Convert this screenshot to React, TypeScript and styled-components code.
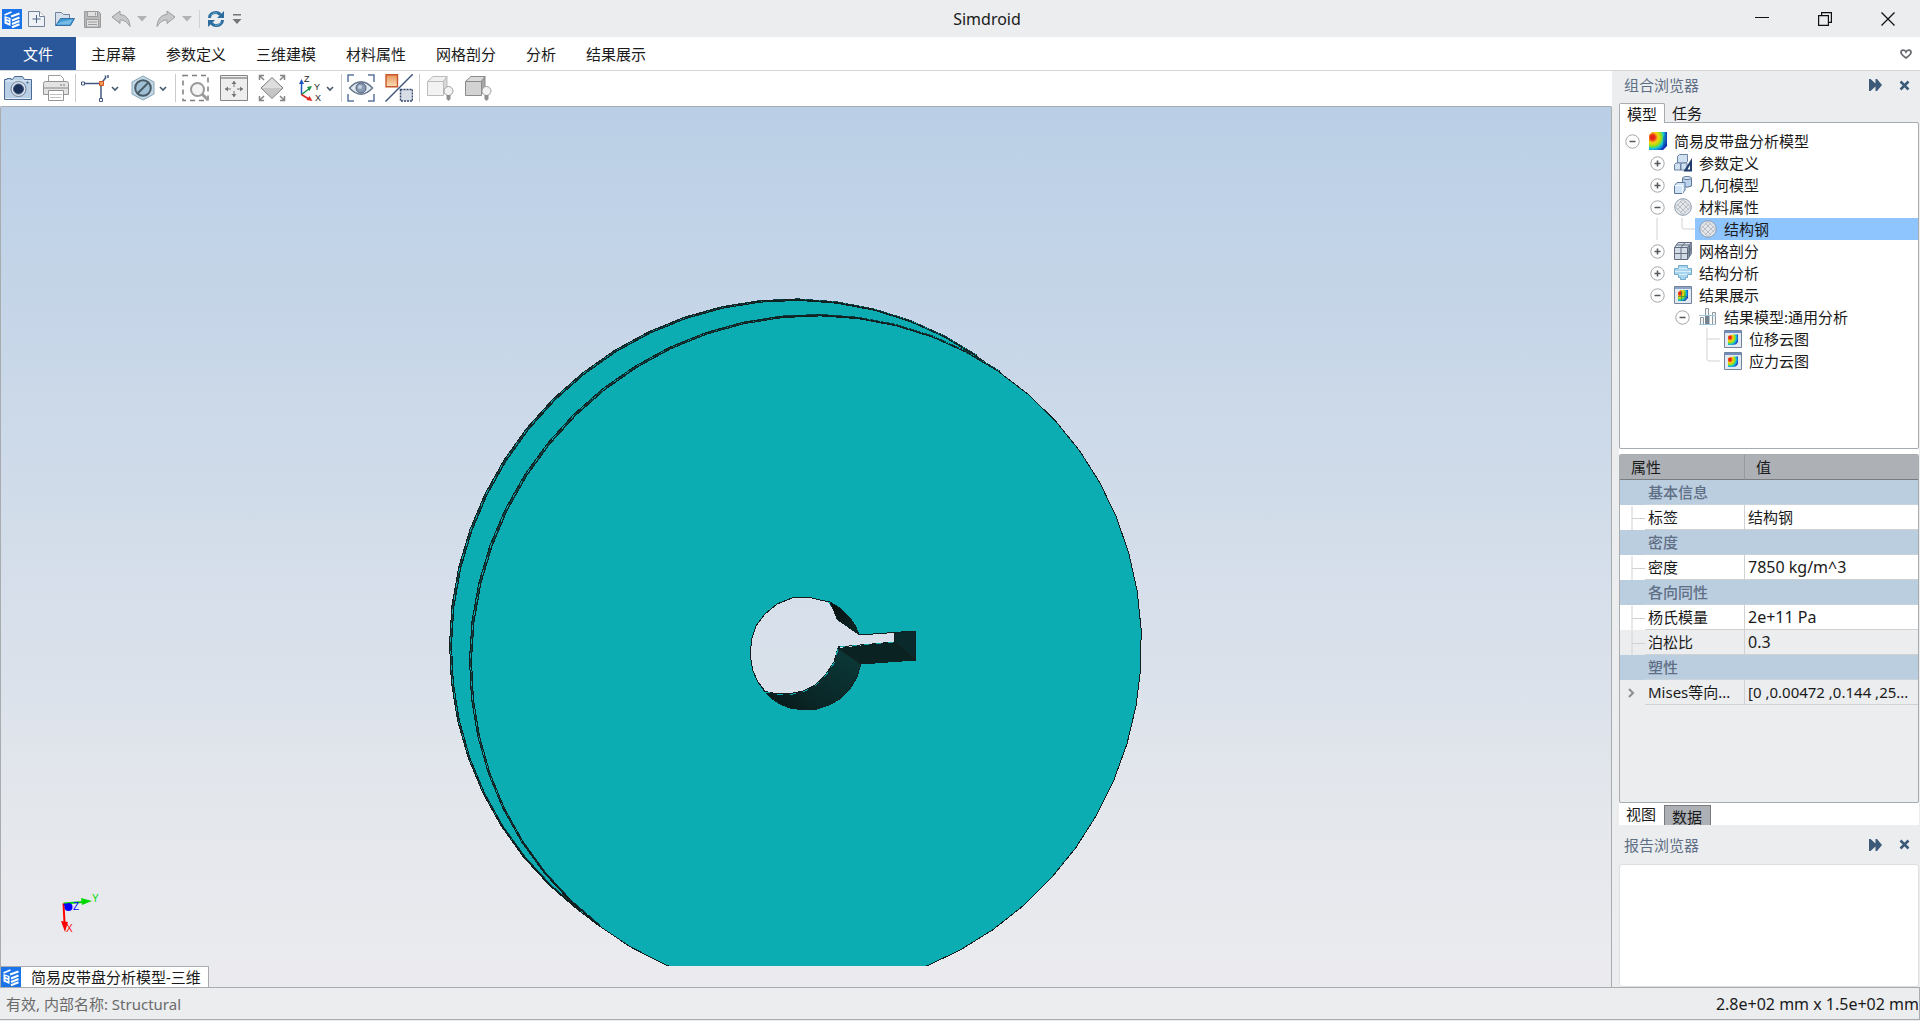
import React from "react";
import styled, { createGlobalStyle } from "styled-components";

const c = {
  chrome: "#ebedef",
  line: "#a9acaf",
  softLine: "#d4d6d9",
  accent: "#2a579a",
  slate: "#5f6f86",
  ink: "#1a1a1a",
  steel: "#3c5a78",
  section: "#bbcee0",
  header: "#adb1b6",
  selected: "#8ec5ff",
  teal: "#0bacb2",
  edge: "#141f20",
  shadow: "#0c3f42",
};

const GlobalStyle = createGlobalStyle`
  *, *::before, *::after { box-sizing: border-box; }
  body {
    margin: 0;
    background: ${c.chrome};
    color: ${c.ink};
    font-family: "Noto Sans", "Noto Sans CJK SC", sans-serif;
    font-size: 15px;
    line-height: 20px;
  }
  button { font: inherit; color: inherit; background: none; border: 0; padding: 0; margin: 0; }
  svg { display: block; }
`;

const Window = styled.div`
  display: flex;
  flex-direction: column;
  height: 100vh;
  min-height: 700px;
  overflow: hidden;
`;

/* ---------- title bar ---------- */

const TitleBar = styled.header`
  display: flex;
  align-items: center;
  flex: none;
  height: 37px;
  padding: 0 1px 0 2px;
`;

const QuickAccess = styled.div`
  display: flex;
  align-items: center;
`;

const QuickButton = styled.button`
  display: grid;
  place-items: center;
  width: 28px;
  height: 28px;
`;

const QuickArrow = styled.button`
  display: grid;
  place-items: center;
  width: 14px;
  height: 28px;
`;

const QuickDivider = styled.span`
  width: 1px;
  height: 18px;
  margin: 0 2px 0 5px;
  background: #d0d3d6;
`;

const QuickGap = styled.span`
  width: 3px;
`;

const LogoSlot = styled.span`
  margin-right: 1px;
`;

const WindowTitle = styled.h1`
  flex: 1;
  margin: 0;
  font-size: 16px;
  font-weight: 400;
  text-align: center;
`;

const WindowButton = styled.button`
  display: grid;
  place-items: center;
  width: 63px;
  height: 36px;
`;

/* ---------- ribbon tabs ---------- */

const MenuBar = styled.nav`
  display: flex;
  align-items: stretch;
  flex: none;
  height: 34px;
  background: #fff;
  border-bottom: 1px solid ${c.softLine};
`;

const FileButton = styled.button`
  width: 76px;
  background: ${c.accent};
  color: #fff;
`;

const MenuButton = styled.button`
  padding: 0 15px;
`;

const MenuSpacer = styled.span`
  flex: 1;
`;

const CollapseButton = styled.button`
  display: grid;
  place-items: center;
  width: 28px;
`;

/* ---------- work area ---------- */

const Work = styled.div`
  display: flex;
  flex: 1;
  min-height: 0;
`;

const Main = styled.main`
  display: flex;
  flex-direction: column;
  flex: 1;
  min-width: 0;
`;

const Toolbar = styled.div`
  display: flex;
  align-items: center;
  flex: none;
  height: 35px;
  padding: 0 0 2px 4px;
  background: #fff;
`;

const ToolGroup = styled.div<{ $gap?: number }>`
  display: flex;
  gap: ${(p) => p.$gap ?? 10}px;
`;

const ToolDivider = styled.span<{ $wide?: boolean }>`
  width: 1px;
  height: 28px;
  margin: 0 ${(p) => (p.$wide ? 6 : 5)}px;
  background: #c9cccf;
`;

const ToolButton = styled.button`
  display: flex;
  align-items: center;
  height: 30px;
`;

const Viewport = styled.section`
  display: flex;
  flex-direction: column;
  flex: 1;
  min-height: 0;
  border: 1px solid ${c.line};
  border-bottom: 0;
  border-radius: 2px 2px 0 0;
  background: linear-gradient(#bacfe6 0%, #dae1eb 63%, #e4e7ec 80%, #ebebef 100%);
`;

const Scene = styled.svg`
  flex: 1;
  width: 100%;
  min-height: 0;
`;

const DocumentTabs = styled.div`
  display: flex;
  flex: none;
`;

const DocumentTab = styled.button`
  display: flex;
  align-items: center;
  gap: 10px;
  height: 21px;
  padding-right: 7px;
  background: #fff;
  border-top: 1px solid ${c.line};
  border-right: 1px solid ${c.line};
`;

/* ---------- dock ---------- */

const Dock = styled.aside`
  display: flex;
  flex-direction: column;
  flex: none;
  width: 308px;
  padding: 0 1px 0 7px;
`;

const DockTitle = styled.div<{ $height: number; $lift?: number }>`
  display: flex;
  align-items: center;
  flex: none;
  height: ${(p) => p.$height}px;
  padding: 0 0 ${(p) => p.$lift ?? 0}px 5px;
  color: ${c.slate};
`;

const DockName = styled.h2`
  flex: 1;
  margin: 0;
  font-size: 15px;
  font-weight: 400;
`;

const DockButton = styled.button`
  display: grid;
  place-items: center;
  width: 29px;
  height: 20px;
`;

const DockTabs = styled.div`
  display: flex;
  flex: none;
  height: 19px;
`;

const DockTab = styled.button<{ $active?: boolean }>`
  height: ${(p) => (p.$active ? 20 : 19)}px;
  padding: 0 7px;
  ${(p) =>
    p.$active &&
    `background: #fff; border: 1px solid ${c.line}; border-bottom: 0; border-radius: 2px 2px 0 0; z-index: 1;`}
`;

const Tree = styled.ul`
  flex: 327 1 327px;
  min-height: 0;
  margin: 0;
  padding: 7px 0 0;
  list-style: none;
  background: #fff;
  border: 1px solid ${c.line};
  border-radius: 0 2px 2px 2px;
  overflow: hidden;
`;

const TreeRow = styled.li`
  display: flex;
  height: 22px;
`;

const TreeCell = styled.span`
  flex: none;
  width: 25px;
`;

const Expander = styled.button`
  display: grid;
  place-items: center;
  flex: none;
  width: 25px;
`;

const TreeLabel = styled.span<{ $selected?: boolean }>`
  display: flex;
  align-items: center;
  gap: 7px;
  flex: 1;
  padding-left: 4px;
  white-space: nowrap;
  background: ${(p) => (p.$selected ? c.selected : "transparent")};
`;

const Splitter = styled.div`
  flex: none;
  height: 5px;
  background: #fff;
`;

const Properties = styled.div`
  flex: 349 1 349px;
  min-height: 0;
  border: 1px solid ${c.line};
  border-radius: 2px;
  overflow: hidden;
`;

const PropertyTable = styled.table`
  width: 100%;
  table-layout: fixed;
  border-collapse: separate;
  border-spacing: 0;
`;

const IndentCol = styled.col`
  width: 25px;
`;

const NameCol = styled.col`
  width: 99px;
`;

const HeadCell = styled.th<{ $value?: boolean }>`
  height: 25px;
  padding: 0 11px;
  background: ${c.header};
  border-bottom: 1px solid #777d80;
  border-left: ${(p) => (p.$value ? "1px solid #979b9f" : "0")};
  font-weight: 400;
  text-align: left;
`;

const PropertyRow = styled.tr<{ $shade?: boolean }>`
  height: 25px;
  background: ${(p) => (p.$shade ? c.chrome : "#fff")};
`;

const SectionRow = styled.tr`
  height: 25px;
  background: ${c.section};
`;

const SectionCell = styled.th`
  padding: 0 3px;
  color: ${c.slate};
  font-weight: 500;
  text-align: left;
  border-bottom: 1px solid #c9d3dc;
`;

const GuideCell = styled.td`
  padding: 0;
`;

const NameCell = styled.td`
  padding: 0 3px;
  border-bottom: 1px solid #cfd1d3;
  white-space: nowrap;
`;

const ValueCell = styled.td<{ $numeric?: boolean }>`
  padding: 0 3px;
  border-bottom: 1px solid #cfd1d3;
  border-left: 1px solid #cfd1d3;
  font-size: ${(p) => (p.$numeric ? 16 : 15)}px;
  white-space: nowrap;
`;

const ViewTabs = styled.div`
  display: flex;
  flex: none;
  height: 22px;
  background: #fff;
`;

const ViewTab = styled.button<{ $active?: boolean }>`
  padding: 0 8px 0 7px;
  line-height: 16px;
  ${(p) =>
    p.$active &&
    `margin-top: 2px; padding-top: 3px; background: ${c.header}; border: 1px solid #77797c; border-bottom: 0;`}
`;

const Report = styled.div`
  flex: 123 1 123px;
  min-height: 0;
  background: #fff;
  border: 1px solid #dcdee0;
  border-radius: 3px;
`;

/* ---------- status ---------- */

const StatusBar = styled.footer`
  display: flex;
  align-items: center;
  justify-content: space-between;
  flex: none;
  height: 33px;
  margin-bottom: 1px;
  padding: 0 0 0 6px;
  border: 1px solid ${c.line};
  border-left-width: 0;
`;

const StatusNote = styled.span`
  color: #6a6a6a;
`;

const StatusSize = styled.span`
  font-size: 16px;
`;

/* ---------- icons ---------- */

const AppLogo = () => (
  <svg width="20" height="20" viewBox="0 0 20 20">
    <rect width="20" height="20" fill="#1a73e8" />
    <path d="M2.500 6 9.500 3" stroke="#fff" strokeWidth="1.800" />
    <path d="M2.500 7v7.500l6 2.500V9z" fill="#fff" />
    <path d="m4.500 9.500 2.500 1M4.500 12.500l2.500 1" stroke="#1a73e8" strokeWidth="1.300" />
    <path d="m9 7.500 8.500-3M10 11.500l7.500-3M10 15l7.500-3M10 18.300l7.500-3" stroke="#fff" strokeWidth="2" />
  </svg>
);

const NewIcon = () => (
  <svg width="20" height="20" viewBox="0 0 20 20" fill="none">
    <path d="M1.500 2.500h11l5 5v10h-16z" fill="#eef2f6" stroke="#72829b" />
    <path d="M12.500 2.500v5h5" fill="#fff" stroke="#72829b" />
    <path d="M9.500 6v8M5.500 10h8" stroke="#4a6386" />
  </svg>
);

const OpenIcon = () => (
  <svg width="20" height="20" viewBox="0 0 20 20">
    <path d="M.500 16.500v-13h6l2 2h6v5" fill="#d5e0ec" stroke="#73839c" />
    <path d="M.700 16.500 5.500 9.500h14l-4 7z" fill="#3c9bd6" stroke="#3a6fa3" />
    <path d="m2.500 14.500 5-2 10-2-3 5H2z" fill="#9fd0ef" opacity=".6" />
  </svg>
);

const SaveIcon = () => (
  <svg width="20" height="20" viewBox="0 0 20 20" fill="#e0e0e0" stroke="#9c9c9c">
    <path d="M1.500 2.500h14l2 2v14h-16z" fill="#b9b9b9" />
    <path d="M4.500 2.500h10v5h-10zM3.500 10.500h12v7.500h-12z" />
    <path d="M5 13h9M5 15.500h9M12.500 3.500v3" fill="none" />
  </svg>
);

const UndoIcon = ({ flip }: { flip?: boolean }) => (
  <svg width="20" height="20" viewBox="0 0 20 20">
    <path
      transform={flip ? "matrix(-1 0 0 1 20 0)" : undefined}
      d="M1 8 9 2v3.500c6 .5 9.500 4.500 10 12C16 13 13 11 9 11v3.500z"
      fill="#c6c8ca"
      stroke="#9b9ea1"
      strokeLinejoin="round"
    />
  </svg>
);

const TriangleIcon = () => (
  <svg width="10" height="6" viewBox="0 0 10 6">
    <path d="M0 0h10L5 5.500z" fill="#b0b3b6" />
  </svg>
);

const RefreshIcon = () => (
  <svg width="18" height="18" viewBox="0 0 18 18" fill="none" stroke="#2c6d9e" strokeWidth="3">
    <path d="M2.500 8C2.500 4 6 2.500 9 2.500c2 0 3.500 1 4.500 2.500M15.500 10c0 4-3.500 5.500-6.500 5.500-2 0-3.500-1-4.500-2.500" />
    <path d="M17 1v7h-7zM1 17v-7h7z" fill="#2c6d9e" stroke="none" />
    <path d="M4 5.500C5.500 3 8 2.500 10 3M14 12.500c-1.500 2.500-4 3-6 2.500" stroke="#72b2dc" strokeWidth="1" />
  </svg>
);

const CustomizeIcon = () => (
  <svg width="10" height="12" viewBox="0 0 10 12" fill="#747779">
    <path d="M1 1h8v1.500H1zM.500 6h9L5 11z" />
  </svg>
);

const MinimizeIcon = () => (
  <svg width="14" height="14" viewBox="0 0 14 14">
    <path d="M0 5.500h14" stroke="#111" />
  </svg>
);

const RestoreIcon = () => (
  <svg width="14" height="14" viewBox="0 0 14 14" fill="none" stroke="#111" strokeWidth="1.200">
    <path d="M.600 3.600h9.800v9.800H.600zM3.600 3.600v-3h9.800v9.800h-3" />
  </svg>
);

const CloseIcon = () => (
  <svg width="14" height="14" viewBox="0 0 14 14">
    <path d="m.500.500 13 13M13.500.500l-13 13" stroke="#111" strokeWidth="1.300" />
  </svg>
);

const HeartIcon = () => (
  <svg width="12" height="10" viewBox="0 0 12 10">
    <path d="M6 3C4.500.500 1 .500 1 3.500 1 5.500 4 7.500 6 9c2-1.500 5-3.500 5-5.500C11 .500 7.500.500 6 3z" fill="none" stroke="#6c6f73" strokeWidth="1.800" />
  </svg>
);

const ChevronIcon = () => (
  <svg width="12" height="28" viewBox="0 0 12 28">
    <path d="M3 13 6 16l3-3" fill="none" stroke="#46586a" strokeWidth="1.600" />
  </svg>
);

const ToolSvg = ({ children }: { children: React.ReactNode }) => (
  <svg width="28" height="28" viewBox="0 0 28 28" fill="none">
    {children}
  </svg>
);

const CameraIcon = () => (
  <ToolSvg>
    <path d="M.500 5.500H3v-1h4v1h1.500l2-3h8l2 3h7v20H.500z" fill="#b9cfe6" stroke="#4a6a92" />
    <path d="M1.500 7h25M1.500 24.500h25" stroke="#e6eff8" />
    <circle cx="14.500" cy="15" r="7.500" fill="#dbe4ee" stroke="#6d7f95" />
    <circle cx="14.500" cy="15" r="5" fill="#1c3157" stroke="#3f5680" />
    <circle cx="23.500" cy="8.500" r="1" fill="#3f5f88" />
  </ToolSvg>
);

const PrinterIcon = () => (
  <ToolSvg>
    <path d="M6.500 8.500v-7h12l3 3v4" fill="#fff" stroke="#9a9a9a" />
    <path d="M1.500 9.500q0-2 2-2h21q2 0 2 2v11h-25z" fill="#e3e3e3" stroke="#929292" />
    <path d="M2 14h24" stroke="#b4b4b4" strokeWidth="2" />
    <path d="M18 11h6" stroke="#777" strokeDasharray="2 1" />
    <path d="M6.500 16.500h15v10h-15z" fill="#fff" stroke="#929292" />
    <path d="M8 23.500h11M8 20.500h12" stroke="#c0c0c0" />
  </ToolSvg>
);

const SketchIcon = () => (
  <ToolSvg>
    <path d="M2 9.500h18v17M20 9.500l5-6" stroke="#42587f" strokeWidth="1.500" />
    <path d="M.500 8h3v3h-3zM18.500 24.500h3v3h-3z" fill="#fff" stroke="#42587f" />
    <path d="M18.500 7.500h4v4h-4z" fill="#f29a5a" stroke="#d4541d" />
    <path d="M24.500 4V1.500M27 4V1" stroke="#42587f" strokeWidth="1.500" />
  </ToolSvg>
);

const HexIcon = () => (
  <ToolSvg>
    <path d="M14 2 25 8v12l-11 6-11-6V8z" fill="#c3d8e6" stroke="#86a5b8" />
    <circle cx="14" cy="14" r="7.800" fill="#9dc0d4" stroke="#4a5a66" strokeWidth="2" />
    <path d="m8.500 19.500 11-11" stroke="#4a5a66" strokeWidth="2" />
  </ToolSvg>
);

const ZoomAreaIcon = () => (
  <ToolSvg>
    <path d="M1 1.500h25v25H1z" stroke="#7e7e7e" strokeWidth="1.500" strokeDasharray="5 4" />
    <circle cx="15.500" cy="15.500" r="6.500" fill="#f4f4f4" stroke="#9a9a9a" strokeWidth="2" />
    <path d="m20 20 6 6" stroke="#9a9a9a" strokeWidth="3" />
  </ToolSvg>
);

const FitIcon = () => (
  <ToolSvg>
    <path d="M.500 1.500h27v25H.500z" fill="#eee" stroke="#858585" />
    <path d="M1 4h26" stroke="#a9a9a9" strokeWidth="2" />
    <path d="M14 7v6M14 17v6M5 15h6M17 15h6" stroke="#757575" />
    <path d="m11.500 10 2.500-3 2.500 3zM11.500 20l2.500 3 2.500-3zM8 12.500 5 15l3 2.500zM20 12.500l3 2.500-3 2.500z" fill="#757575" />
  </ToolSvg>
);

const DiamondIcon = () => (
  <ToolSvg>
    <path d="m14 3.500 11 10.500-11 10.500L3 14z" fill="#c6c6c6" stroke="#858585" />
    <path d="m14 4.500 10 9.500H4z" fill="#dedede" />
    <path d="M1.500 6V1.500H6M1.500 1.500 6 6M22 1.500h4.500V6M26.500 1.500 22 6M1.500 22v4.500H6M1.500 26.500 6 22M22 26.500h4.500V22M26.500 26.500 22 22" stroke="#858585" strokeWidth="1.500" />
  </ToolSvg>
);

const AxisLetter = styled.text`
  font: 9px "Liberation Sans", Arial, sans-serif;
  fill: #222;
`;

const AxesIcon = () => (
  <ToolSvg>
    <path d="M5.500 20.500v-12" stroke="#1f55c0" strokeWidth="1.500" />
    <path d="M3 10 5.500 5 8 10z" fill="#1f55c0" />
    <path d="m5.500 20.500 8-6" stroke="#159345" strokeWidth="1.500" />
    <path d="m11 13 5-1-2.500 5z" fill="#159345" />
    <path d="m5.500 20.500 8 5" stroke="#d9221c" strokeWidth="1.500" />
    <path d="m10.500 26 6 1-3-5z" fill="#e22a22" />
    <AxisLetter x="8" y="8">Z</AxisLetter>
    <AxisLetter x="18" y="16">Y</AxisLetter>
    <AxisLetter x="19" y="27">X</AxisLetter>
  </ToolSvg>
);

const EyeIcon = () => (
  <ToolSvg>
    <path d="M1 8V1h6M21 1h6v7M1 20v7h6M21 27h6v-7" stroke="#5b75a0" strokeWidth="1.500" />
    <path d="M2.500 14Q14 1.500 25.500 14 14 26.500 2.500 14z" fill="#e4eaf2" stroke="#68788c" strokeWidth="1.500" />
    <circle cx="14" cy="14" r="5" fill="#8a9cb4" stroke="#4c5d75" />
    <circle cx="13" cy="13" r="2" fill="#c5d2e2" />
  </ToolSvg>
);

const InvertIcon = () => (
  <ToolSvg>
    <defs>
      <linearGradient id="orange" x1="0" y1="0" x2="0" y2="1">
        <stop offset="0" stopColor="#e8935c" />
        <stop offset="1" stopColor="#fbe0b8" />
      </linearGradient>
    </defs>
    <path d="M1 .700h11.500v12H1z" fill="url(#orange)" stroke="#c8582a" strokeWidth="1.400" />
    <path d="M.500 27.500 28 0" stroke="#42587f" strokeWidth="1.500" />
    <path d="M15.500 15.500h12v11.500h-12z" fill="#d8dee6" stroke="#33476f" strokeWidth="1.500" strokeDasharray="2 1" />
  </ToolSvg>
);

const BulbBoxIcon = ({ dark }: { dark?: boolean }) => (
  <ToolSvg>
    <g stroke={dark ? "#8b8b8b" : "#bcbcbc"}>
      <path d="M1.500 7.500 7 2.500h14l-3.500 5z" fill={dark ? "#dadada" : "#f0f0f0"} />
      <path d="M1.500 7.500h16v14h-16z" fill={dark ? "#d2d2d2" : "#f2f2f2"} />
      <path d="M17.500 7.500 21 2.500v12l-3.500 6z" fill={dark ? "#a8a8a8" : "#d8d8d8"} />
    </g>
    <circle cx="22.500" cy="17" r="4.500" fill="#f2f2f2" stroke="#a0a0a0" />
    <path d="M20.500 21h4v4l-2 2-2-2z" fill="#8f8f8f" />
  </ToolSvg>
);

const ForwardIcon = () => (
  <svg width="13" height="12" viewBox="0 0 13 12" fill={c.steel}>
    <path d="M0 0h1.500l5 4.500V0H8l5 6-5 6H6.500V7.500l-5 4.500H0z" />
  </svg>
);

const CrossIcon = () => (
  <svg width="11" height="11" viewBox="0 0 11 11">
    <path d="m1.500 1.500 8 8M9.500 1.500l-8 8" stroke={c.steel} strokeWidth="2.500" />
  </svg>
);

const ExpandIcon = ({ open }: { open: boolean }) => (
  <svg width="15" height="15" viewBox="0 0 15 15" fill="none">
    <circle cx="7.500" cy="7.500" r="6.700" fill="#fff" stroke="#a3a6a9" />
    <path d={open ? "M4.500 7.500h6" : "M4.500 7.500h6M7.500 4.500v6"} stroke="#55595d" strokeWidth="1.600" />
  </svg>
);

const GuideIcon = ({ kind }: { kind: string }) => (
  <svg width="25" height="22" viewBox="0 0 25 22" fill="none" stroke="#d2d2d2">
    {kind === "line" && <path d="M12 0v22" />}
    {kind === "elbow" && <path d="M12 0v9q0 2 2 2h11" />}
    {kind === "tee" && <path d="M12 0v22M12 11h13" />}
  </svg>
);

const Rainbow = ({ id }: { id: string }) => (
  <defs>
    <radialGradient id={id} cx="20%" cy="30%" r="95%">
      <stop offset=".12" stopColor="#e8211d" />
      <stop offset=".32" stopColor="#f7d117" />
      <stop offset=".5" stopColor="#9be00f" />
      <stop offset=".66" stopColor="#12c8d8" />
      <stop offset=".88" stopColor="#1638c8" />
    </radialGradient>
  </defs>
);

const NodeSvg = ({ children }: { children: React.ReactNode }) => (
  <svg width="18" height="18" viewBox="0 0 18 18" fill="none">
    {children}
  </svg>
);

const nodeIcons: Record<string, React.ReactNode> = {
  model: (
    <NodeSvg>
      <Rainbow id="rb-model" />
      <path d="M0 3 3 0h15v14l-4 4H0z" fill="url(#rb-model)" />
      <path d="m14 18 4-4V0l-4 5z" fill="#10308f" opacity=".4" />
    </NodeSvg>
  ),
  params: (
    <NodeSvg>
      <g fill="#cfe0f1" stroke="#6d82a3">
        <path d="M3.500 9V2.500l2-2h8v7L12 9z" />
        <path d="M.500 10.500 2 9h5v7H.500zM6.500 10.500 8 9h5v7H6.500z" />
      </g>
      <path d="M9.500 17.500 18 4v13.500z" fill="#203d6e" />
      <path d="M13.500 15.500 16 11v4.500z" fill="#fff" />
    </NodeSvg>
  ),
  geometry: (
    <NodeSvg>
      <path d="M8.500 2v8q4.500 2.500 9 0V2" fill="#b9d2ea" stroke="#5d7699" />
      <ellipse cx="13" cy="2" rx="4.500" ry="1.500" fill="#dcebf7" stroke="#5d7699" />
      <path d="M.500 9.500 3 6.500h8v7.500l-2.500 3.500h-8z" fill="#cfe4f7" stroke="#5d7699" />
      <path d="M.500 9.500h8v8" stroke="#f4faff" />
    </NodeSvg>
  ),
  material: (
    <NodeSvg>
      <circle cx="9" cy="9" r="8.300" fill="#e6e8eb" stroke="#8c9bb0" />
      <path d="m3 6 9 9M6 3l9 9M1.500 9l7.500 7.500M9 1.500 16.500 9M12 3l-9 9M15 6l-9 9M9 1.500 1.500 9M16.500 9 9 16.500" stroke="#a9b0ba" strokeWidth=".800" />
    </NodeSvg>
  ),
  mesh: (
    <NodeSvg>
      <path d="M.500 5.500 4 .500h13.500v11l-4 6H.500z" fill="#d3dbe6" stroke="#626e80" />
      <path d="m13.500 5.500 4-5v11l-4 6z" fill="#8290a4" />
      <path d="M.500 5.500h13v12M7 5.500v12M.500 11.500h13M13.500 5.500l4-5M13.500 11.500l4-5.500M7 5.500l4-5M2.500 3h13v11.500" stroke="#626e80" />
    </NodeSvg>
  ),
  solver: (
    <NodeSvg>
      <path d="M4.500 1.500h9v3h4v6h-4v3h-2v2h-5v-2h-2v-3h-4v-6h4z" fill="#a9d6ee" stroke="#6fa9cc" />
      <path d="M1 7.500h16M4.500 4.500h9M4.500 10.500h9" stroke="#d6effa" />
    </NodeSvg>
  ),
  results: (
    <NodeSvg>
      <Rainbow id="rb-results" />
      <path d="M.500.500h17v17H.500z" fill="#e3e9f1" stroke="#72839c" />
      <path d="M1 2h16" stroke="#8aa3c8" strokeWidth="2" />
      <path d="M4 6.500 6.500 4H14v8l-3 3H4z" fill="url(#rb-results)" />
      <path d="M4 10.500h9M7.500 5v10M11 6v9" stroke="#384" strokeWidth=".700" />
    </NodeSvg>
  ),
  chart: (
    <NodeSvg>
      <path d="M1.500 9.500h3v7h-3zM13.500 4.500h3v12h-3z" fill="#f3f4f5" stroke="#8c979f" />
      <path d="M6.500.500h3v16h-3z" fill="#f3f4f5" stroke="#8c979f" />
      <path d="M6 7h4.500v10H6z" fill="#73828c" />
      <path d="M0 7.500h17M0 16.500h17" stroke="#9cc4dd" />
    </NodeSvg>
  ),
  cloud: (
    <NodeSvg>
      <Rainbow id="rb-cloud" />
      <path d="M.500.500h17v17H.500z" fill="#e3e9f1" stroke="#72839c" />
      <path d="M1 2h16" stroke="#6f8dc0" strokeWidth="2" />
      <path d="M4 6q2-2 10-1.500v7q-1 4-8 3.500H4z" fill="url(#rb-cloud)" />
    </NodeSvg>
  ),
};

/* ---------- data ---------- */

type Node = {
  label: string;
  icon: string;
  guides: string[];
  open?: boolean;
  selected?: boolean;
};

const nodes: Node[] = [
  { label: "简易皮带盘分析模型", icon: "model", guides: [], open: true },
  { label: "参数定义", icon: "params", guides: [""], open: false },
  { label: "几何模型", icon: "geometry", guides: [""], open: false },
  { label: "材料属性", icon: "material", guides: [""], open: true },
  { label: "结构钢", icon: "material", guides: ["", "line", "elbow"], selected: true },
  { label: "网格剖分", icon: "mesh", guides: [""], open: false },
  { label: "结构分析", icon: "solver", guides: [""], open: false },
  { label: "结果展示", icon: "results", guides: [""], open: true },
  { label: "结果模型:通用分析", icon: "chart", guides: ["", ""], open: true },
  { label: "位移云图", icon: "cloud", guides: ["", "", "", "tee"] },
  { label: "应力云图", icon: "cloud", guides: ["", "", "", "elbow"] },
];

type Property = {
  section?: string;
  name?: string;
  value?: string;
  numeric?: boolean;
  shade?: boolean;
  expandable?: boolean;
};

const properties: Property[] = [
  { section: "基本信息" },
  { name: "标签", value: "结构钢" },
  { section: "密度" },
  { name: "密度", value: "7850 kg/m^3", numeric: true },
  { section: "各向同性" },
  { name: "杨氏模量", value: "2e+11 Pa", numeric: true },
  { name: "泊松比", value: "0.3", numeric: true, shade: true },
  { section: "塑性" },
  { name: "Mises等向...", value: "[0 ,0.00472 ,0.144 ,25...", shade: true, expandable: true },
];

const menus = ["主屏幕", "参数定义", "三维建模", "材料属性", "网格剖分", "分析", "结果展示"];

/* ---------- pulley model ---------- */

type Disc = { cx: number; cy: number; rx: number; ry: number };

const frontDisc: Disc = { cx: 805.5, cy: 653.5, rx: 336, ry: 338.5 };
const backDisc: Disc = { cx: 784, cy: 638, rx: 334.5, ry: 338.5 };
const SKEW = 0.0255;

/* Points of a tessellated disc edge between two angles, in degrees clockwise from the right. */
const arc = (disc: Disc, from: number, to: number) => {
  const steps = Math.round((to - from) / 6.5);
  return Array.from({ length: steps + 1 }, (_, i) => {
    const t = ((from + ((to - from) * i) / steps) * Math.PI) / 180;
    const dx = disc.rx * Math.cos(t);
    const x = disc.cx + dx;
    const y = disc.cy - SKEW * dx + disc.ry * Math.sin(t);
    return `${x.toFixed(1)},${y.toFixed(1)}`;
  }).join(" ");
};

const LOWER = 128;
const UPPER = 305;

const rimEdge = arc(backDisc, LOWER, UPPER);
const faceEdge = arc(frontDisc, LOWER, UPPER);
const outline = `${rimEdge} ${arc(frontDisc, UPPER, 360 + LOWER)}`;

const TriadLetter = styled.text`
  font: 10px "Liberation Sans", Arial, sans-serif;
`;

const DoubleEdge = ({ points }: { points: string }) => (
  <>
    <polyline points={points} stroke={c.shadow} strokeWidth="2" transform="translate(1 0)" />
    <polyline points={points} stroke={c.teal} strokeDasharray="5 9" transform="translate(1 0)" />
    <polyline points={points} stroke={c.edge} />
    <polyline points={points} stroke={c.edge} transform="translate(2 1)" />
  </>
);

const PulleyScene = () => (
  <Scene viewBox="1 107 1610 859" preserveAspectRatio="xMidYMid meet" role="img" aria-label="简易皮带盘分析模型">
    <defs>
      <clipPath id="window">
        <rect x="1" y="107" width="1610" height="859" />
      </clipPath>
      <linearGradient id="bore" x1="0" y1="1" x2="1" y2="0">
        <stop offset="0" stopColor="#081111" />
        <stop offset=".35" stopColor="#0a2626" />
        <stop offset="1" stopColor="#0b3a3b" />
      </linearGradient>
      <linearGradient id="boreTop" x1="0" y1="0" x2="1" y2="1">
        <stop offset="0" stopColor="#070d0d" />
        <stop offset="1" stopColor="#0b2929" />
      </linearGradient>
      <linearGradient id="through" x1="0" y1="0" x2="0" y2="1">
        <stop offset="0" stopColor="#d6dfea" />
        <stop offset="1" stopColor="#dae1eb" />
      </linearGradient>
    </defs>
    <g shapeRendering="crispEdges" strokeLinejoin="round" fill="none" clipPath="url(#window)">
      <polygon points={outline} fill={c.teal} stroke={c.edge} />
      <DoubleEdge points={rimEdge} />
      <DoubleEdge points={faceEdge} />
      <path
        d="M753 671 758 682 765 692 771 698 780 704 790 708 803 710 817 709 829 705 840 699 850 689 857 677 861 664 838 648z"
        fill="url(#bore)"
        stroke={c.edge}
      />
      <path d="M830 602 840 608 850 618 856 627 859 635 837 620z" fill="url(#boreTop)" stroke={c.edge} />
      <path
        d="M808 598 823 600 829 603 833 610 837 620 859 635 894 633V642L838 648 834 662 826 674 815 685 803 691 793 693 776 693 765 691 758 682 753 671 750 655 752 638 756 626 765 614 777 604 792 598z"
        fill="url(#through)"
      />
      <path d="M765 691 758 682 753 671 750 655 752 638 756 626 765 614 777 604 792 598 808 597 820 600 830 602" stroke={c.edge} />
      <path d="M894 633 915 631 916 660 894 642z" fill="#0a292b" />
      <path d="M838 648 894 642 916 660 861 664z" fill="#0a2222" />
      <path d="M859 635 915 631 916 660 861 664 838 647 894 642V633M894 642 916 660" stroke={c.edge} />
      <path d="M838 648 834 662 826 674 815 685 803 691 793 693 776 694 765 692" stroke={c.edge} />
      <path d="M840 647 894 642" stroke={c.teal} strokeDasharray="5 7" />
      <path d="M838 649 834 663 826 675 815 686 803 692 793 694 776 694 765 692" stroke={c.teal} strokeDasharray="6 7" />
    </g>
    <g>
      <path d="M63.500 903.500 83 902" stroke="#00d800" strokeWidth="2" />
      <path d="m81 898 11 3-10 4z" fill="#00d800" />
      <path d="M63.500 903.500 64.500 923" stroke="#f00" strokeWidth="2" />
      <path d="m61 921 7 1-3 10z" fill="#f00" />
      <circle cx="68.500" cy="907" r="4" fill="#00f" />
      <path d="m64 904 4 3" stroke="#00f" strokeWidth="2" />
      <TriadLetter x="92" y="902" fill="#00d800">Y</TriadLetter>
      <TriadLetter x="73" y="910" fill="#00f">Z</TriadLetter>
      <TriadLetter x="66" y="932" fill="#f00">X</TriadLetter>
    </g>
  </Scene>
);

/* ---------- page ---------- */

const DockActions = () => (
  <>
    <DockButton aria-label="停靠"><ForwardIcon /></DockButton>
    <DockButton aria-label="关闭"><CrossIcon /></DockButton>
  </>
);

export default function App() {
  return (
    <Window>
      <GlobalStyle />
      <TitleBar>
        <QuickAccess>
          <LogoSlot><AppLogo /></LogoSlot>
          <QuickButton aria-label="新建"><NewIcon /></QuickButton>
          <QuickButton aria-label="打开"><OpenIcon /></QuickButton>
          <QuickButton aria-label="保存"><SaveIcon /></QuickButton>
          <QuickButton aria-label="撤销"><UndoIcon /></QuickButton>
          <QuickArrow aria-label="撤销列表"><TriangleIcon /></QuickArrow>
          <QuickGap />
          <QuickButton aria-label="重做"><UndoIcon flip /></QuickButton>
          <QuickArrow aria-label="重做列表"><TriangleIcon /></QuickArrow>
          <QuickDivider />
          <QuickButton aria-label="刷新"><RefreshIcon /></QuickButton>
          <QuickArrow aria-label="自定义"><CustomizeIcon /></QuickArrow>
        </QuickAccess>
        <WindowTitle>Simdroid</WindowTitle>
        <WindowButton aria-label="最小化"><MinimizeIcon /></WindowButton>
        <WindowButton aria-label="还原"><RestoreIcon /></WindowButton>
        <WindowButton aria-label="关闭"><CloseIcon /></WindowButton>
      </TitleBar>

      <MenuBar>
        <FileButton>文件</FileButton>
        {menus.map((m) => (
          <MenuButton key={m}>{m}</MenuButton>
        ))}
        <MenuSpacer />
        <CollapseButton aria-label="收藏"><HeartIcon /></CollapseButton>
      </MenuBar>

      <Work>
        <Main>
          <Toolbar>
            <ToolGroup>
              <ToolButton aria-label="截图"><CameraIcon /></ToolButton>
              <ToolButton aria-label="打印"><PrinterIcon /></ToolButton>
            </ToolGroup>
            <ToolDivider />
            <ToolGroup $gap={8}>
              <ToolButton aria-label="草图"><SketchIcon /><ChevronIcon /></ToolButton>
              <ToolButton aria-label="选择过滤"><HexIcon /><ChevronIcon /></ToolButton>
            </ToolGroup>
            <ToolDivider $wide />
            <ToolGroup>
              <ToolButton aria-label="框选缩放"><ZoomAreaIcon /></ToolButton>
              <ToolButton aria-label="适合窗口"><FitIcon /></ToolButton>
              <ToolButton aria-label="适合选择"><DiamondIcon /></ToolButton>
              <ToolButton aria-label="视角"><AxesIcon /><ChevronIcon /></ToolButton>
            </ToolGroup>
            <ToolDivider />
            <ToolGroup>
              <ToolButton aria-label="显示"><EyeIcon /></ToolButton>
              <ToolButton aria-label="反选显示"><InvertIcon /></ToolButton>
            </ToolGroup>
            <ToolDivider $wide />
            <ToolGroup>
              <ToolButton aria-label="隐藏实体"><BulbBoxIcon /></ToolButton>
              <ToolButton aria-label="显示实体"><BulbBoxIcon dark /></ToolButton>
            </ToolGroup>
          </Toolbar>
          <Viewport>
            <PulleyScene />
            <DocumentTabs>
              <DocumentTab><AppLogo />简易皮带盘分析模型-三维</DocumentTab>
            </DocumentTabs>
          </Viewport>
        </Main>

        <Dock>
          <DockTitle $height={32} $lift={4}>
            <DockName>组合浏览器</DockName>
            <DockActions />
          </DockTitle>
          <DockTabs>
            <DockTab $active>模型</DockTab>
            <DockTab>任务</DockTab>
          </DockTabs>
          <Tree>
            {nodes.map((n) => (
              <TreeRow key={n.label}>
                {n.guides.map((g, i) => (
                  <TreeCell key={i}><GuideIcon kind={g} /></TreeCell>
                ))}
                {n.open !== undefined && (
                  <Expander aria-label={n.open ? "折叠" : "展开"}><ExpandIcon open={n.open} /></Expander>
                )}
                <TreeLabel $selected={n.selected}>
                  {nodeIcons[n.icon]}
                  {n.label}
                </TreeLabel>
              </TreeRow>
            ))}
          </Tree>
          <Splitter />
          <Properties>
            <PropertyTable>
              <colgroup>
                <IndentCol />
                <NameCol />
                <col />
              </colgroup>
              <thead>
                <tr>
                  <HeadCell colSpan={2}>属性</HeadCell>
                  <HeadCell $value>值</HeadCell>
                </tr>
              </thead>
              <tbody>
                {properties.map((p, i) =>
                  p.section ? (
                    <SectionRow key={i}>
                      <GuideCell />
                      <SectionCell colSpan={2}>{p.section}</SectionCell>
                    </SectionRow>
                  ) : (
                    <PropertyRow key={i} $shade={p.shade}>
                      <GuideCell>
                        {p.expandable ? (
                          <svg width="25" height="24" viewBox="0 0 25 24" fill="none">
                            <path d="m9 8 4 4-4 4" stroke="#8b8e91" strokeWidth="2" />
                          </svg>
                        ) : (
                          <svg width="25" height="24" viewBox="0 0 25 24" fill="none">
                            <path d="M12 0v24M12 12.500h13" stroke="#d2d2d2" />
                          </svg>
                        )}
                      </GuideCell>
                      <NameCell>{p.name}</NameCell>
                      <ValueCell $numeric={p.numeric}>{p.value}</ValueCell>
                    </PropertyRow>
                  ),
                )}
              </tbody>
            </PropertyTable>
          </Properties>
          <ViewTabs>
            <ViewTab>视图</ViewTab>
            <ViewTab $active>数据</ViewTab>
          </ViewTabs>
          <DockTitle $height={39}>
            <DockName>报告浏览器</DockName>
            <DockActions />
          </DockTitle>
          <Report />
        </Dock>
      </Work>

      <StatusBar>
        <StatusNote>有效, 内部名称: Structural</StatusNote>
        <StatusSize>2.8e+02 mm x 1.5e+02 mm</StatusSize>
      </StatusBar>
    </Window>
  );
}
